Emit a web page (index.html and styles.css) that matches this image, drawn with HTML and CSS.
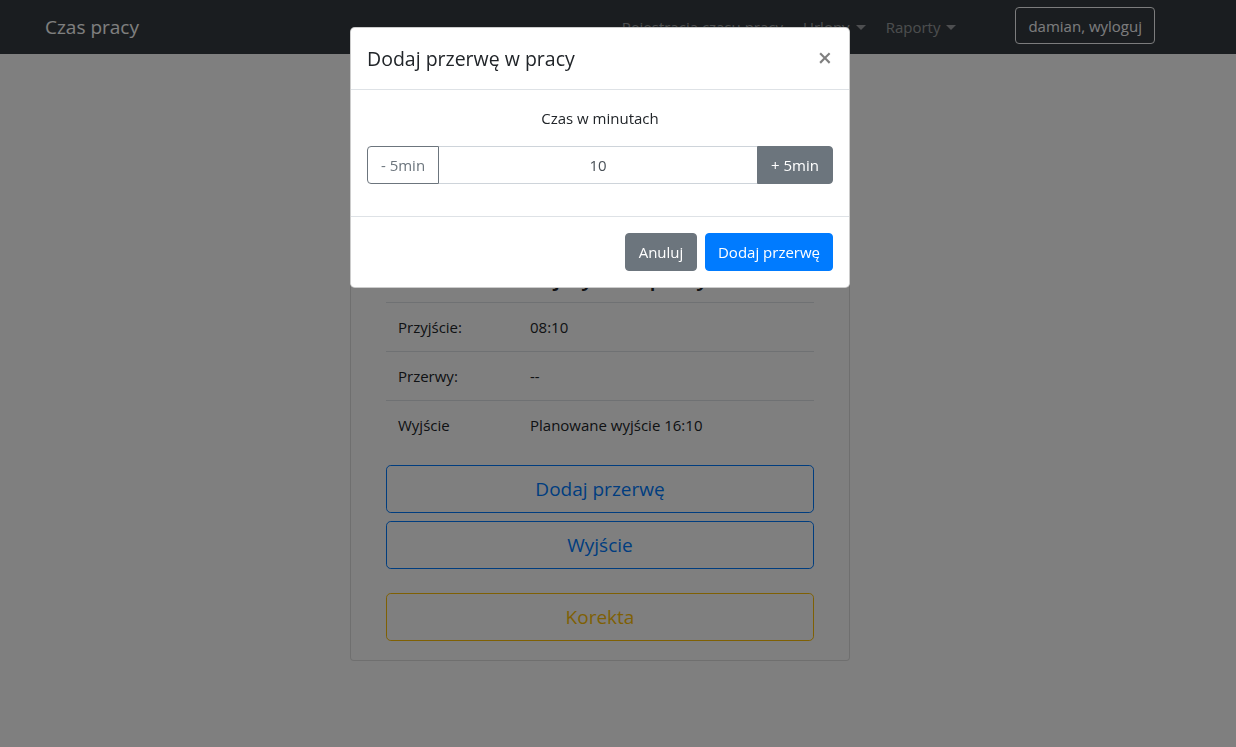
FILE: index.html
```html
<!DOCTYPE html>
<html lang="pl">
<head>
<meta charset="utf-8">
<title>Czas pracy</title>
<link rel="stylesheet" href="styles.css">
</head>
<body>
<nav class="navbar">
  <a class="brand" href="#">Czas pracy</a>
  <ul class="nav">
    <li><a class="nav-link" href="#">Rejestracja czasu pracy</a></li>
    <li><a class="nav-link caret" href="#">Urlopy</a></li>
    <li><a class="nav-link caret" href="#">Raporty</a></li>
  </ul>
  <button class="btn-logout">damian, wyloguj</button>
</nav>

<main class="main">
  <section class="card">
    <h4 class="card-title">Dzisiejszy czas pracy</h4>
    <table class="table">
      <tr><td class="label">Przyjście:</td><td>08:10</td></tr>
      <tr><td class="label">Przerwy:</td><td>--</td></tr>
      <tr><td class="label">Wyjście</td><td>Planowane wyjście 16:10</td></tr>
    </table>
    <div class="actions">
      <button class="btn-lg outline-primary">Dodaj przerwę</button>
      <button class="btn-lg outline-primary">Wyjście</button>
      <button class="btn-lg outline-warning spaced">Korekta</button>
    </div>
  </section>
</main>

<div class="backdrop"></div>

<div class="modal">
  <div class="modal-content">
    <div class="modal-header">
      <h5 class="modal-title">Dodaj przerwę w pracy</h5>
      <button class="close" aria-label="Close">&times;</button>
    </div>
    <div class="modal-body">
      <p class="hint">Czas w minutach</p>
      <div class="input-group">
        <button class="btn btn-outline-secondary">- 5min</button>
        <input class="form-control" type="text" value="10">
        <button class="btn btn-secondary">+ 5min</button>
      </div>
    </div>
    <div class="modal-footer">
      <button class="btn btn-secondary">Anuluj</button>
      <button class="btn btn-primary">Dodaj przerwę</button>
    </div>
  </div>
</div>
</body>
</html>
```

FILE: styles.css
```css
* { box-sizing: border-box; }

html, body { margin: 0; padding: 0; }

body {
  font-family: "Segoe UI", "Open Sans", "Noto Sans", sans-serif;
  font-size: 15px;
  line-height: 24px;
  color: #212529;
  background: #fff;
  height: 747px;
  overflow: hidden;
}

button, input { font-family: inherit; }

/* Navbar */
.navbar {
  display: flex;
  align-items: center;
  height: 54px;
  padding: 0 81px 0 45px;
  background: #343a40;
}
.brand {
  color: #fff;
  font-size: 19px;
  line-height: 30px;
  text-decoration: none;
}
.nav {
  display: flex;
  list-style: none;
  margin: 0 0 0 auto;
  padding: 0;
}
.nav-link {
  display: block;
  padding: 8px 10px;
  color: rgba(255, 255, 255, 0.5);
  text-decoration: none;
}
.caret::after {
  content: "";
  display: inline-block;
  margin-left: 6px;
  vertical-align: 3px;
  border-top: 5px solid;
  border-right: 5px solid transparent;
  border-left: 5px solid transparent;
}
.btn-logout {
  align-self: flex-start;
  margin: 7px 0 0 49px;
  height: 37px;
  padding: 0 12px;
  font-size: 15px;
  color: #f8f9fa;
  background: transparent;
  border: 1px solid #f8f9fa;
  border-radius: 4px;
}

/* Main card */
.main {
  display: flex;
  padding: 24px 0 0 350px;
}
.card {
  width: 500px;
  padding: 184px 35px 19px;
  background: #fff;
  border: 1px solid rgba(0, 0, 0, 0.125);
  border-radius: 4px;
}
.card-title {
  margin: 0 0 10px;
  text-align: center;
  font-size: 22px;
  line-height: 29px;
  font-weight: 600;
}
.table {
  width: 100%;
  border-collapse: collapse;
}
.table td {
  padding: 12px;
  border-top: 1px solid #dee2e6;
  line-height: 24px;
}
.table td.label { width: 132px; }
.actions {
  display: flex;
  flex-direction: column;
  gap: 8px;
  margin-top: 16px;
}
.btn-lg {
  height: 48px;
  font-size: 19px;
  background: transparent;
  border-radius: 4.8px;
}
.outline-primary { color: #007bff; border: 1px solid #007bff; }
.outline-warning { color: #ffc107; border: 1px solid #ffc107; }
.spaced { margin-top: 16px; }

/* Backdrop & modal */
.backdrop {
  position: fixed;
  inset: 0;
  background: rgba(0, 0, 0, 0.5);
}
.modal {
  position: fixed;
  top: 27px;
  left: 350px;
  width: 500px;
}
.modal-content {
  display: flex;
  flex-direction: column;
  background: #fff;
  border: 1px solid rgba(0, 0, 0, 0.2);
  border-radius: 4.8px;
}
.modal-header {
  display: flex;
  align-items: center;
  justify-content: space-between;
  height: 62px;
  padding: 0 16px;
  border-bottom: 1px solid #dee2e6;
}
.modal-title {
  margin: 0;
  font-size: 19.5px;
  line-height: 30px;
  font-weight: 500;
}
.close {
  padding: 0;
  margin: 0 1px 2px 0;
  background: transparent;
  border: 0;
  font-size: 25px;
  font-weight: 600;
  line-height: 1;
  color: #000;
  opacity: 0.5;
}
.modal-body {
  padding: 16px 16px 32px;
}
.hint {
  margin: 0 0 16px;
  text-align: center;
}
.input-group {
  display: flex;
  height: 38px;
}
.btn {
  height: 38px;
  padding: 0 12px;
  font-size: 15px;
  border: 1px solid transparent;
  border-radius: 4px;
}
.btn-outline-secondary {
  width: 72px;
  color: #6c757d;
  background: transparent;
  border-color: #6c757d;
  border-radius: 4px 0 0 4px;
}
.form-control {
  flex: 1;
  min-width: 0;
  height: 38px;
  font-size: 15px;
  text-align: center;
  color: #495057;
  border: 1px solid #ced4da;
  border-left: 0;
  border-right: 0;
  outline: none;
}
.input-group .btn-secondary {
  width: 76px;
  border-radius: 0 4px 4px 0;
}
.btn-secondary { color: #fff; background: #6c757d; border-color: #6c757d; }
.btn-primary { color: #fff; background: #007bff; border-color: #007bff; }
.modal-footer {
  display: flex;
  justify-content: flex-end;
  gap: 8px;
  padding: 16px;
  border-top: 1px solid #dee2e6;
}
.modal-footer .btn-secondary { width: 72px; padding: 0; }
.modal-footer .btn-primary { width: 128px; padding: 0; }
```
